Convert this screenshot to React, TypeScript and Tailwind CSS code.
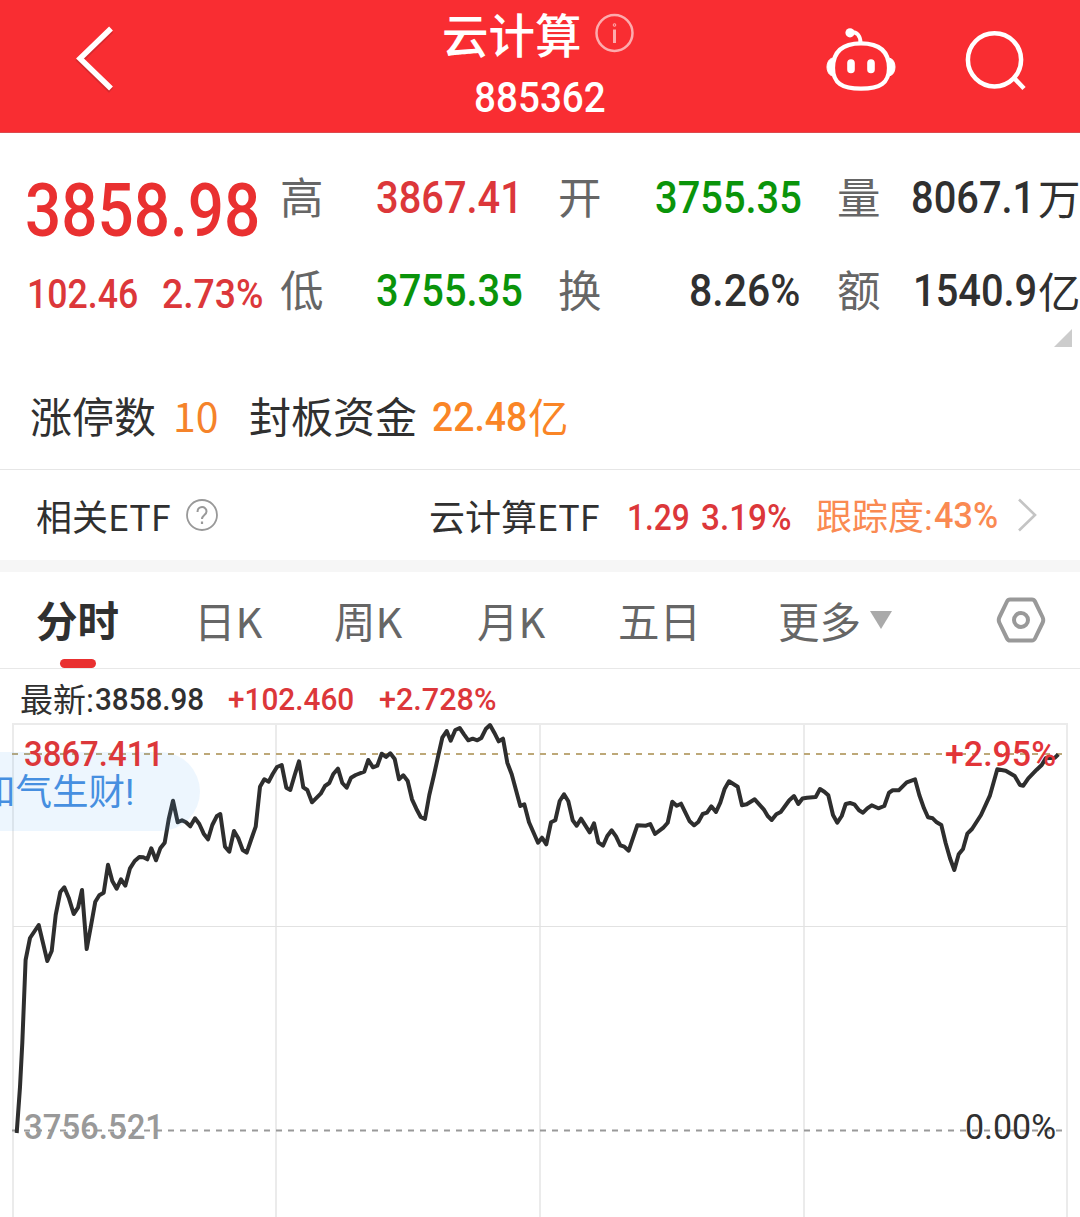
import React from "react";
import clsx from "clsx";

interface NumProps {
  children: React.ReactNode;
  box: string;
  text: string;
}

// Condensed figures: the outer box keeps the real width, the inner text is squeezed
function Num({ children, box, text }: NumProps) {
  return (
    <span className={clsx("inline-block whitespace-nowrap", box)}>
      <span className={clsx("inline-block origin-left", text)}>{children}</span>
    </span>
  );
}

interface QuoteCellProps {
  label: string;
  value: string;
  unit?: string;
  box: string;
  scale?: string;
  color: string;
}

function QuoteCell({ label, value, unit, box, scale, color }: QuoteCellProps) {
  return (
    <div className="flex h-[93px] justify-between leading-[93px]">
      <span className="mt-[2px] -ml-px text-[43.500px] text-[#666]">{label}</span>
      <span className={clsx("flex text-[44.500px] font-medium", color)}>
        <Num box={clsx("mt-px", box)} text={scale ?? "scale-x-[0.895]"}>
          {value}
        </Num>
        {unit && (
          <span className="mt-[3px] w-[41px] text-[42.500px] font-normal">{unit}</span>
        )}
      </span>
    </div>
  );
}

const tabs = [
  { name: "日K", box: "ml-[74px] w-[71px]" },
  { name: "周K", box: "ml-[69px] w-[72px]" },
  { name: "月K", box: "ml-[71px] w-[71px]" },
  { name: "五日", box: "ml-[70px] w-[83px]" },
];

const prices: [number, number][] = [
  [16.7, 1133], [20, 1087], [22.3, 1043], [25.6, 960], [30, 938], [38.7, 925],
  [43, 943], [47.3, 961], [51.7, 951], [55.7, 915], [60.3, 892], [64.3, 887.3],
  [68.7, 897.7], [73.7, 914], [78, 907.7], [82, 890], [86.7, 949], [91, 925.7],
  [95.3, 901.7], [99.3, 895.3], [103.7, 892.7], [108, 864.7], [112.3, 881],
  [116.7, 888.7], [121, 879.3], [125.3, 885.7], [130, 868.3], [134.7, 861],
  [139.3, 857], [143.3, 857.3], [147.3, 859.3], [151.3, 848.3], [156, 860.3],
  [160.3, 848.3], [164.7, 842.7], [168.7, 819.3], [173, 800.7], [177.7, 822.3],
  [182, 820.3], [186, 822.3], [190.3, 826.3], [195, 818.3], [199.3, 824],
  [203.7, 833.7], [208, 839.3], [212.3, 825], [216.7, 816.3], [220.3, 814],
  [225, 846.7], [229.3, 851.7], [234, 831], [238.3, 838.3], [242.7, 850],
  [246.7, 852.7], [251, 840], [255.7, 826.7], [260, 786.7], [264.3, 779.3],
  [268.7, 781.7], [272.7, 774], [277, 767], [281.7, 765], [286.3, 787.7],
  [290.3, 790], [294.7, 775], [299, 761.3], [303.3, 787.3], [307.3, 790],
  [312, 802.3], [320.7, 793.7], [325, 786], [329.3, 783], [333.3, 774],
  [338, 768.7], [342.3, 783], [346.7, 787.7], [351, 777.7], [355.7, 775],
  [364.3, 771.7], [368.3, 760], [373, 767.3], [377.3, 765.7], [381.7, 753.7],
  [386, 757], [390.3, 753.3], [394.7, 759], [399, 779.3], [403.3, 775.3],
  [407.7, 781], [412, 799.3], [416.3, 808.7], [420.7, 817], [425, 819],
  [429.3, 795], [434, 775], [438, 756.7], [442.3, 737.7], [446.7, 731],
  [450.7, 740.7], [455.3, 730], [459.7, 728], [464, 734.3], [468.3, 740.3],
  [472.7, 738.7], [477.3, 740.3], [481.3, 738], [486, 728.7], [490, 725],
  [494.3, 732.7], [498.7, 741.3], [503, 738.7], [507.3, 762.7], [511.7, 774.3],
  [520.3, 806], [524.3, 804.3], [529, 822.3], [538, 842.7], [542, 837.7],
  [546.3, 844.3], [551, 822.3], [555.3, 820.3], [559.7, 801], [564, 794.3],
  [568.3, 801.3], [572.7, 820.3], [576.7, 825.7], [581, 818.7], [589.7, 832.3],
  [594, 823.3], [598.3, 842.3], [603, 845.7], [607.3, 836], [611.7, 830.3],
  [616, 836.3], [620.3, 845.3], [624.3, 846.7], [628.7, 850.7], [637.3, 825.3],
  [646, 825.7], [650.3, 824], [655, 834], [663.7, 827.3], [667.7, 822.7],
  [672.3, 801.7], [676.7, 805.7], [681, 803.7], [689.7, 821.3], [694, 825.3],
  [698.3, 822], [702.7, 814], [707, 812.7], [711.3, 806.3], [716, 812],
  [720.3, 802.7], [724.7, 788.7], [729, 781.3], [737.7, 786.7], [742, 805.3],
  [746.7, 804.3], [754.7, 799.3], [763.7, 809.3], [767.7, 816], [771.7, 820],
  [776.3, 814.3], [780.7, 812], [789.3, 800.3], [794, 796], [798.3, 804],
  [802.5, 798.5], [807, 797.7], [815.7, 797], [820, 789], [824.3, 791.7],
  [828.3, 795.3], [833, 815], [837.3, 822.7], [841.7, 816], [845.7, 804],
  [850, 803], [854.3, 804.3], [859, 810.3], [863, 812.7], [867.3, 808.3],
  [871.7, 805.3], [878.3, 808.3], [884.3, 806], [889, 792.7], [892.7, 790.3],
  [898.7, 790.3], [906.7, 782.3], [915, 779.3], [919.3, 795], [924, 808.3],
  [928, 817.3], [932.7, 818.3], [936.7, 822.3], [941.3, 825], [945.7, 843.3],
  [950, 858.3], [954.3, 870], [958.7, 854.3], [963, 849], [967.3, 833.7],
  [972, 829], [981, 815], [990, 795.3], [997.3, 769.3], [1005.7, 770.7],
  [1014.7, 776], [1020, 785], [1023.3, 785.7], [1028.3, 778.3], [1036.7, 769.7],
  [1041.7, 765], [1045.7, 758.3], [1055, 757.7], [1058.3, 754.3],
];

function Header() {
  return (
    <header className="flex h-[133px] justify-between border-b border-[#dc4a4e] bg-[#f92d32] text-white">
      <div className="w-[300px]">
        <svg className="mt-[22px] ml-[70px]" width="50" height="74" fill="none">
          <path d="M41 7 L10 37 L41 67" stroke="#b3262a" strokeOpacity="0.5" strokeWidth="6" transform="translate(0 1.5)" />
          <path d="M41 6.500 L10 36.500 L41 66.500" stroke="#fff" strokeWidth="5.500" />
        </svg>
      </div>
      <div className="flex w-[300px] flex-col pl-[52px]">
        <div className="flex h-[70px] items-center">
          <h1 className="mt-[4px] w-[140px] text-[46.500px] leading-[70px] font-medium whitespace-nowrap">云计算</h1>
          <svg className="-mt-[4px] ml-[12px]" width="40" height="40" fill="none" stroke="#fff" strokeOpacity="0.6">
            <circle cx="20.500" cy="20" r="18" strokeWidth="2.500" />
            <path d="M20.500 16.500 V30" strokeWidth="3" />
            <circle cx="20.500" cy="12" r="0.500" strokeWidth="2.600" />
          </svg>
        </div>
        <div className="ml-[32px] h-[54px] text-[42px] leading-[56px] font-medium">
          <Num box="w-[132px]" text="scale-x-[0.92]">885362</Num>
        </div>
      </div>
      <div className="flex w-[300px] gap-[64px] pl-[43px]">
        <svg className="mt-[24px]" width="76" height="72" fill="none" stroke="#fff">
          <circle cx="27" cy="8.800" r="4.600" fill="#fff" stroke="none" />
          <path d="M27 8 C34 7.500 37.500 11.500 37.500 19" strokeWidth="4" />
          <path d="M38 19.300 C57 19.300 66 28 66 44 C66 59 57 64.700 38 64.700 C19 64.700 10 59 10 44 C10 28 19 19.300 38 19.300Z" strokeWidth="4.200" />
          <path d="M10 34 C2 35 2 51 10 52Z M66 34 C74 35 74 51 66 52Z" fill="#fff" strokeWidth="1" />
          <path d="M28 39 V45.500 M48 39 V45.500" strokeWidth="7.600" strokeLinecap="round" />
        </svg>
        <svg className="mt-[28px]" width="66" height="66" fill="none" stroke="#fff">
          <circle cx="31.500" cy="31.800" r="26.600" strokeWidth="4.500" />
          <path d="M51 50 L61 60.500" strokeWidth="4.500" />
        </svg>
      </div>
    </header>
  );
}

function Quotes() {
  return (
    <section className="relative flex h-[228px] pt-[18px]">
      <div className="w-[281px] shrink-0 pl-[25px]">
        <div className="h-[96px] text-[73.500px] leading-[121px] font-medium text-[#e93030]">
          <Num box="w-[236px]" text="scale-x-[0.868]">3858.98</Num>
        </div>
        <div className="flex h-[93px] text-[41px] leading-[95px] font-medium text-[#dc373a]">
          <Num box="ml-[2px] w-[135px]" text="scale-x-[0.87]">102.46</Num>
          <Num box="w-[110px]" text="scale-x-[0.91]">2.73%</Num>
        </div>
      </div>
      <div className="w-[241px]">
        <QuoteCell label="高" value="3867.41" box="w-[146px]" color="text-[#dc373a]" />
        <QuoteCell label="低" value="3755.35" box="w-[146px]" color="text-[#0a940a]" />
      </div>
      <div className="ml-[37px] w-[242px]">
        <QuoteCell label="开" value="3755.35" box="w-[146px]" color="text-[#0a940a]" />
        <QuoteCell label="换" value="8.26%" box="w-[112px]" scale="scale-x-[0.92]" color="text-[#303030]" />
      </div>
      <div className="ml-[37px] w-[241px]">
        <QuoteCell label="量" value="8067.1" unit="万" box="w-[127px]" color="text-[#303030]" />
        <QuoteCell label="额" value="1540.9" unit="亿" box="w-[125px]" color="text-[#303030]" />
      </div>
      <svg className="absolute right-[8px] bottom-[14px]" width="18" height="18">
        <path d="M18 0 V18 H0Z" fill="#ccc" />
      </svg>
    </section>
  );
}

function LimitUp() {
  return (
    <section className="flex h-[109px] border-b border-[#e6e6e6] pl-[30px] leading-[108px] whitespace-nowrap text-[#303030]">
      <span className="mt-[4px] w-[143px] text-[42px]">涨停数</span>
      <span className="-mt-px w-[76px] font-[Noto_Sans_CJK_SC] text-[41px] text-[#f5832a]">10</span>
      <span className="mt-[4px] w-[183px] text-[42px]">封板资金</span>
      <span className="flex text-[41px] font-medium text-[#fa8526]">
        <Num box="mt-[2px] w-[96px]" text="scale-x-[0.91]">22.48</Num>
        <span className="mt-[4px] text-[40.500px] font-normal">亿</span>
      </span>
    </section>
  );
}

function RelatedEtf() {
  return (
    <section className="flex h-[90px] items-center pl-[36px] text-[36px] leading-[90px] whitespace-nowrap text-[#303030]">
      <span className="w-[150px] font-[Noto_Sans_CJK_SC]">相关ETF</span>
      <svg width="32" height="32" fill="none" stroke="#999">
        <circle cx="16" cy="16" r="15" strokeWidth="1.800" />
        <path d="M11.500 13 C11.500 6.500 20.500 6.500 20.500 12.500 C20.500 16 16 16 16 20" strokeWidth="2" />
        <path d="M16 22.500 V25" strokeWidth="2.200" />
      </svg>
      <span className="ml-[211px] w-[198px] font-[Noto_Sans_CJK_SC]">云计算ETF</span>
      <span className="mt-[5px] flex font-medium text-[#dc373a]">
        <Num box="w-[74px]" text="scale-x-[0.88]">1.29</Num>
        <Num box="w-[115px]" text="scale-x-[0.925]">3.19%</Num>
      </span>
      <span className="flex text-[#fa8a52]">
        <span className="mt-[5px] w-[118px]">跟踪度:</span>
        <Num box="mt-[3px] w-[68px] font-medium" text="scale-x-[0.95]">43%</Num>
      </span>
      <svg className="ml-[15px]" width="22" height="36" fill="none">
        <path d="M2 2.500 L18 18 L2 33.500" stroke="#c4c4c4" strokeWidth="2.600" />
      </svg>
    </section>
  );
}

function Tabs() {
  return (
    <nav className="flex h-[97px] items-center border-b border-[#e8e8e8] pl-[36px] font-[Noto_Sans_CJK_SC] text-[41.500px] leading-[96px] whitespace-nowrap text-[#666]">
      <div className="relative h-[96px] w-[84px] leading-[95px] font-bold text-[#303030]">
        分时
        <span className="absolute bottom-0 left-[24px] h-[9px] w-[36px] rounded-full bg-[#e93030]" />
      </div>
      {tabs.map((tab) => (
        <span key={tab.name} className={tab.box}>
          {tab.name}
        </span>
      ))}
      <span className="ml-[77px] w-[91px]">更多</span>
      <svg width="24" height="20">
        <path d="M1 1 H23 L12 19Z" fill="#aaa" />
      </svg>
      <svg className="ml-[102px]" width="52" height="50" fill="none" stroke="#999">
        <path d="M15 4.500 H37 Q39 4.500 40 6.500 L47.500 22 Q49 25 47.500 28 L40 43.500 Q39 45.500 37 45.500 H15 Q13 45.500 12 43.500 L4.500 28 Q3 25 4.500 22 L12 6.500 Q13 4.500 15 4.500Z" strokeWidth="4" />
        <circle cx="26" cy="25" r="7" strokeWidth="4" />
      </svg>
    </nav>
  );
}

function Chart() {
  return (
    <section className="relative h-[497px] overflow-hidden">
      <svg className="block" width="1080" height="497" viewBox="0 720 1080 497" fill="none">
        <path d="M13 1217 V724 H1067 V1217 M276 724 V1217 M540 724 V1217 M804 724 V1217" stroke="#ebebeb" strokeWidth="2" />
        <path d="M13 926.500 H1067" stroke="#e2e2e2" />
        <path d="M12 754 H1062" stroke="#bda878" strokeWidth="2" strokeDasharray="6 6" />
        <path d="M12 1130.500 H1062" stroke="#999" strokeWidth="1.800" strokeDasharray="6 6" />
        <polyline
          points={prices.map((p) => p.join(",")).join(" ")}
          stroke="#2e2e2e"
          strokeWidth="4"
          strokeLinejoin="round"
        />
      </svg>
      <div className="absolute top-[32px] left-0 h-[79px] w-[200px] rounded-r-full bg-[#4aa3f5]/10 text-[36.500px] leading-[82px] whitespace-nowrap text-[#468fe0]">
        <span className="-ml-[21px]">和气生财!</span>
      </div>
      <div className="absolute top-[15px] left-[24px] text-[35px] leading-[40px] font-medium text-[#dc373a]">
        <Num box="w-[140px]" text="scale-x-[0.94]">3867.411</Num>
      </div>
      <div className="absolute top-[15px] left-[945px] text-[35px] leading-[40px] font-medium text-[#e23438]">
        <Num box="w-[112px]" text="scale-x-[0.97]">+2.95%</Num>
      </div>
      <div className="absolute top-[388px] left-[24px] text-[35px] leading-[40px] font-medium text-[#999]">
        <Num box="w-[140px]" text="scale-x-[0.94]">3756.521</Num>
      </div>
      <div className="absolute top-[388px] left-[965px] text-[35px] leading-[40px] text-[#303030]">
        <Num box="w-[92px]" text="scale-x-[0.97]">0.00%</Num>
      </div>
    </section>
  );
}

export default function App() {
  return (
    <div className="h-[1217px] w-[1080px] overflow-hidden bg-white font-[Roboto,Noto_Sans_CJK_SC,sans-serif]">
      <Header />
      <Quotes />
      <LimitUp />
      <RelatedEtf />
      <div className="h-[12px] bg-[#f6f6f6]" />
      <Tabs />
      <div className="flex h-[51px] pl-[20px] text-[32px] leading-[60px] font-medium text-[#303030]">
        <span className="mt-[2px] w-[75px] text-[33px] font-normal whitespace-nowrap">最新:</span>
        <Num box="w-[133px]" text="scale-x-[0.925]">3858.98</Num>
        <Num box="w-[151px] text-[#dc373a]" text="scale-x-[0.93]">+102.460</Num>
        <Num box="w-[120px] text-[#dc373a]" text="scale-x-[0.955]">+2.728%</Num>
      </div>
      <Chart />
    </div>
  );
}
